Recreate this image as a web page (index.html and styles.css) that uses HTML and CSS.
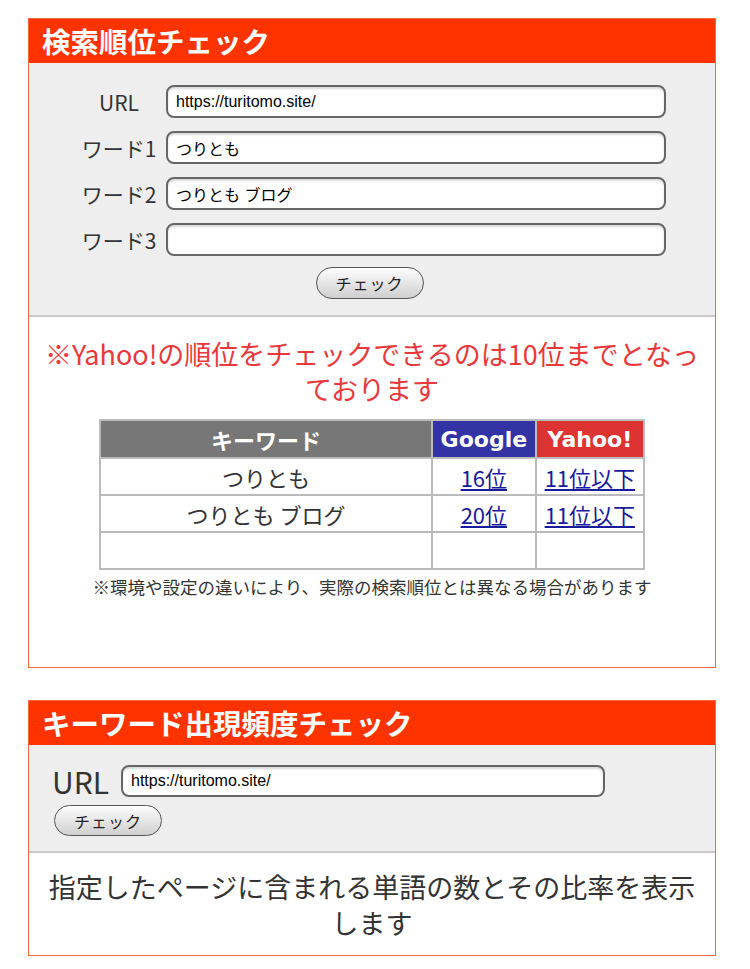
FILE: index.html
```html
<!DOCTYPE html>
<html lang="ja">

<head>
  <meta charset="UTF-8">
  <title>検索順位チェック</title>
  <link rel="stylesheet" href="styles.css">
</head>

<body>
<div class="box">
  <h2 class="box-title">検索順位チェック</h2>
  <form class="rank-form">
    <label class="form-label">URL</label>
    <input class="form-input" type="text" value="https://turitomo.site/">
    <label class="form-label">ワード1</label>
    <input class="form-input" type="text" value="つりとも">
    <label class="form-label">ワード2</label>
    <input class="form-input" type="text" value="つりとも ブログ">
    <label class="form-label">ワード3</label>
    <input class="form-input" type="text" value="">
    <div class="form-submit">
      <button class="check-btn" type="button">チェック</button>
    </div>
  </form>
  <div class="result">
    <p class="notice">※Yahoo!の順位をチェックできるのは10位までとなっております</p>
    <table class="rank-table">
      <tr>
        <th class="th-word">キーワード</th>
        <th class="th-google">Google</th>
        <th class="th-yahoo">Yahoo!</th>
      </tr>
      <tr>
        <td>つりとも</td>
        <td><a href="#">16位</a></td>
        <td><a href="#">11位以下</a></td>
      </tr>
      <tr>
        <td>つりとも ブログ</td>
        <td><a href="#">20位</a></td>
        <td><a href="#">11位以下</a></td>
      </tr>
      <tr>
        <td></td>
        <td></td>
        <td></td>
      </tr>
    </table>
    <p class="footnote">※環境や設定の違いにより、実際の検索順位とは異なる場合があります</p>
  </div>
</div>

<div class="box box-freq">
  <h2 class="box-title">キーワード出現頻度チェック</h2>
  <form class="freq-form">
    <div class="freq-row">
      <label class="freq-label">URL</label>
      <input class="form-input freq-input" type="text" value="https://turitomo.site/">
    </div>
    <button class="check-btn" type="button">チェック</button>
  </form>
  <div class="result result-freq">
    <p class="desc">指定したページに含まれる単語の数とその比率を表示します</p>
  </div>
</div>
</body>

</html>
```

FILE: styles.css
```css
* {
  padding: 0;
  margin: 0;
  box-sizing: border-box;
}

body {
  font-family: "Noto Sans CJK JP", "Noto Sans", sans-serif;
  color: #333;
  background: #fff;
}

.box {
  margin: 18px 0 0 28px;
  width: 688px;
  border: 1px solid #f2683c;
}

.box-freq {
  margin-top: 32px;
}

.box-title {
  height: 44px;
  line-height: 44px;
  padding-left: 13px;
  background-color: #ff3300;
  color: #fff;
  font-size: 28.5px;
  font-weight: bold;
}

/* 検索順位フォーム */
.rank-form {
  display: grid;
  grid-template-columns: 90px 500px;
  column-gap: 2px;
  row-gap: 13px;
  align-items: center;
  padding: 22px 0 16px 45px;
  background-color: #eee;
  border-bottom: 2px solid #ccc;
}

.form-label {
  text-align: center;
  font-size: 21px;
  color: #333;
}

.form-input {
  height: 33px;
  padding: 0 8px;
  border: 2px solid #666;
  border-radius: 8px;
  background: #fff;
  box-shadow: inset 0 2px 2px rgba(0, 0, 0, 0.15);
  font-family: "Liberation Sans", "Noto Sans CJK JP", sans-serif;
  font-size: 16px;
  color: #000;
}

.form-submit {
  grid-column: 1 / 3;
  text-align: center;
  padding-right: 1px;
  margin-top: -2px;
}

.check-btn {
  width: 108px;
  height: 32px;
  border: 1.5px solid #555;
  border-radius: 16px;
  background: linear-gradient(#fdfdfd, #cfcfcf);
  font-family: "Noto Sans CJK JP", sans-serif;
  font-size: 16px;
  letter-spacing: 1px;
  color: #222;
}

/* 結果 */
.result {
  padding: 19px 10px 68px;
  text-align: center;
}

.notice {
  font-size: 27px;
  line-height: 35px;
  color: #e8383b;
}

.rank-table {
  margin: 13px auto 0;
  width: 546px;
  border-collapse: collapse;
  font-size: 22px;
}

.rank-table th,
.rank-table td {
  border: 2px solid #bbb;
  height: 37px;
  text-align: center;
  font-weight: normal;
}

.rank-table th {
  height: 38px;
  color: #fff;
  font-weight: bold;
  font-family: "DejaVu Sans", "Noto Sans CJK JP", sans-serif;
}

.rank-table td {
  color: #333;
}

.th-word {
  width: 332px;
  background-color: #777;
  font-family: "Noto Sans CJK JP", sans-serif !important;
}

.th-google {
  background-color: #3333a6;
}

.th-yahoo {
  background-color: #dd3333;
}

.rank-table a {
  color: #1a1a9c;
}

.footnote {
  margin-top: 4px;
  font-size: 17.5px;
  color: #333;
}

/* 出現頻度フォーム */
.freq-form {
  padding: 18px 0 15px 23px;
  background-color: #eee;
  border-bottom: 2px solid #ccc;
}

.freq-row {
  display: flex;
  align-items: center;
  gap: 12px;
}

.freq-label {
  font-size: 30px;
  line-height: 36px;
  color: #333;
}

.freq-input {
  width: 484px;
  height: 32px;
}

.freq-form .check-btn {
  margin: 6px 0 0 2px;
  height: 31px;
}

.result-freq {
  padding: 16px 14px 14px;
}

.desc {
  font-size: 27px;
  line-height: 36px;
  color: #333;
}
```
